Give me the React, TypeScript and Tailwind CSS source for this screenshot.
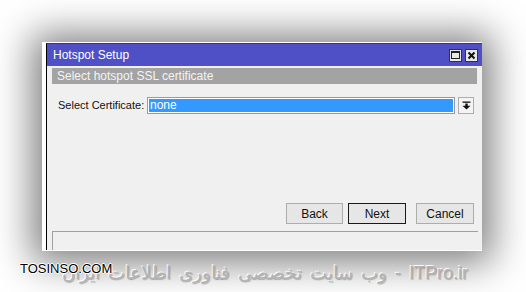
import React from "react";

export default function App() {
  const font = { fontFamily: '"Liberation Sans", Arial, sans-serif' };
  return (
    <div
      className="relative w-[526px] h-[292px] bg-white overflow-hidden flex flex-col"
      style={font}
    >
      {/* window */}
      <div className="ml-[42px] mt-[42px] w-[440px] h-[209px] bg-white pl-[4px] pt-[1px] shadow-[0_2px_36px_10px_rgba(0,0,0,0.5)]">
        <div className="h-[207px] w-[436px] flex flex-col border-l border-t border-l-black border-t-[#3a3a60]">
          {/* title bar */}
          <div className="h-[22px] bg-[#4f4fc6] flex items-center justify-between pl-[6px] pr-[4px]">
            <span className="text-white text-[12px] leading-none">Hotspot Setup</span>
            <div className="flex gap-[3px]">
              <div className="w-[13px] h-[13px] bg-[#e8e8e8] border border-[#333] flex items-center justify-center">
                <div className="w-[9px] h-[8px] border border-[#222] border-t-2"></div>
              </div>
              <div className="w-[13px] h-[13px] bg-[#e8e8e8] border border-[#333] flex items-center justify-center">
                <svg width="9" height="9" viewBox="0 0 9 9">
                  <path d="M1.5 1.5 L7.5 7.5 M7.5 1.5 L1.5 7.5" stroke="#111" strokeWidth="2" />
                </svg>
              </div>
            </div>
          </div>
          {/* body */}
          <div className="flex-1 bg-[#f0f0f0] flex flex-col px-[5px] pt-[2px]">
            <div className="h-[16px] bg-[#a3a3a3] text-[#f4f4f4] text-[12px] leading-[16px] pl-[5px]">
              Select hotspot SSL certificate
            </div>
            <div className="mt-[13px] h-[17px] flex items-center">
              <div className="w-[95px] pl-[6px] text-[11px] text-[#111] leading-none whitespace-nowrap">
                Select Certificate:
              </div>
              <div className="w-[308px] h-[17px] border border-[#9a9a9a] bg-white p-[1px]">
                <div className="h-full bg-[#3399ff] text-white text-[12px] leading-[13px] pl-[1px]">
                  none
                </div>
              </div>
              <div className="ml-[3px] w-[16px] h-[17px] border border-[#adadad] bg-[#f4f4f4] flex items-center justify-center">
                <svg width="9" height="9" viewBox="0 0 9 9">
                  <rect x="0.5" y="0.5" width="8" height="1.3" fill="#111" />
                  <rect x="3.3" y="2.5" width="2.4" height="2.5" fill="#111" />
                  <path d="M0.5 4.8 L8.5 4.8 L4.5 8.6 Z" fill="#111" />
                </svg>
              </div>
            </div>
            <div className="flex-1"></div>
            <div className="flex justify-end pr-[3px] h-[21px]">
              <button className="w-[57px] h-[21px] border border-[#adadad] bg-[#e6e6e6] text-[12px] text-[#111]">
                Back
              </button>
              <button className="ml-[5px] w-[58px] h-[21px] border border-[#1a1a1a] bg-[#e6e6e6] text-[12px] text-[#111]">
                Next
              </button>
              <button className="ml-[10px] w-[58px] h-[21px] border border-[#adadad] bg-[#e6e6e6] text-[12px] text-[#111]">
                Cancel
              </button>
            </div>
            <div className="mt-[7px] h-[19px] border-t border-l border-[#a0a0a0] mr-[-1px]"></div>
          </div>
        </div>
      </div>

      {/* watermark */}
      <div
        dir="rtl"
        className="mt-[10px] pr-[58px] text-right text-[18px] leading-[24px] font-light text-[#b4b4b4] whitespace-nowrap"
        style={{
          fontFamily: '"Liberation Sans", "DejaVu Sans", sans-serif',
          wordSpacing: "3px",
          textShadow: "1px 1px 1px rgba(0,0,0,0.25), -1px -1px 0 rgba(255,255,255,0.9)",
        }}
      >
        ITPro.ir - وب سایت تخصصی فناوری اطلاعات ایران
      </div>
      <div
        className="absolute left-[20px] top-[262px] text-[13px] leading-none text-black"
        style={{
          textShadow:
            "1px 0 0 #fff, -1px 0 0 #fff, 0 1px 0 #fff, 0 -1px 0 #fff",
        }}
      >
        TOSINSO.COM
      </div>
    </div>
  );
}
